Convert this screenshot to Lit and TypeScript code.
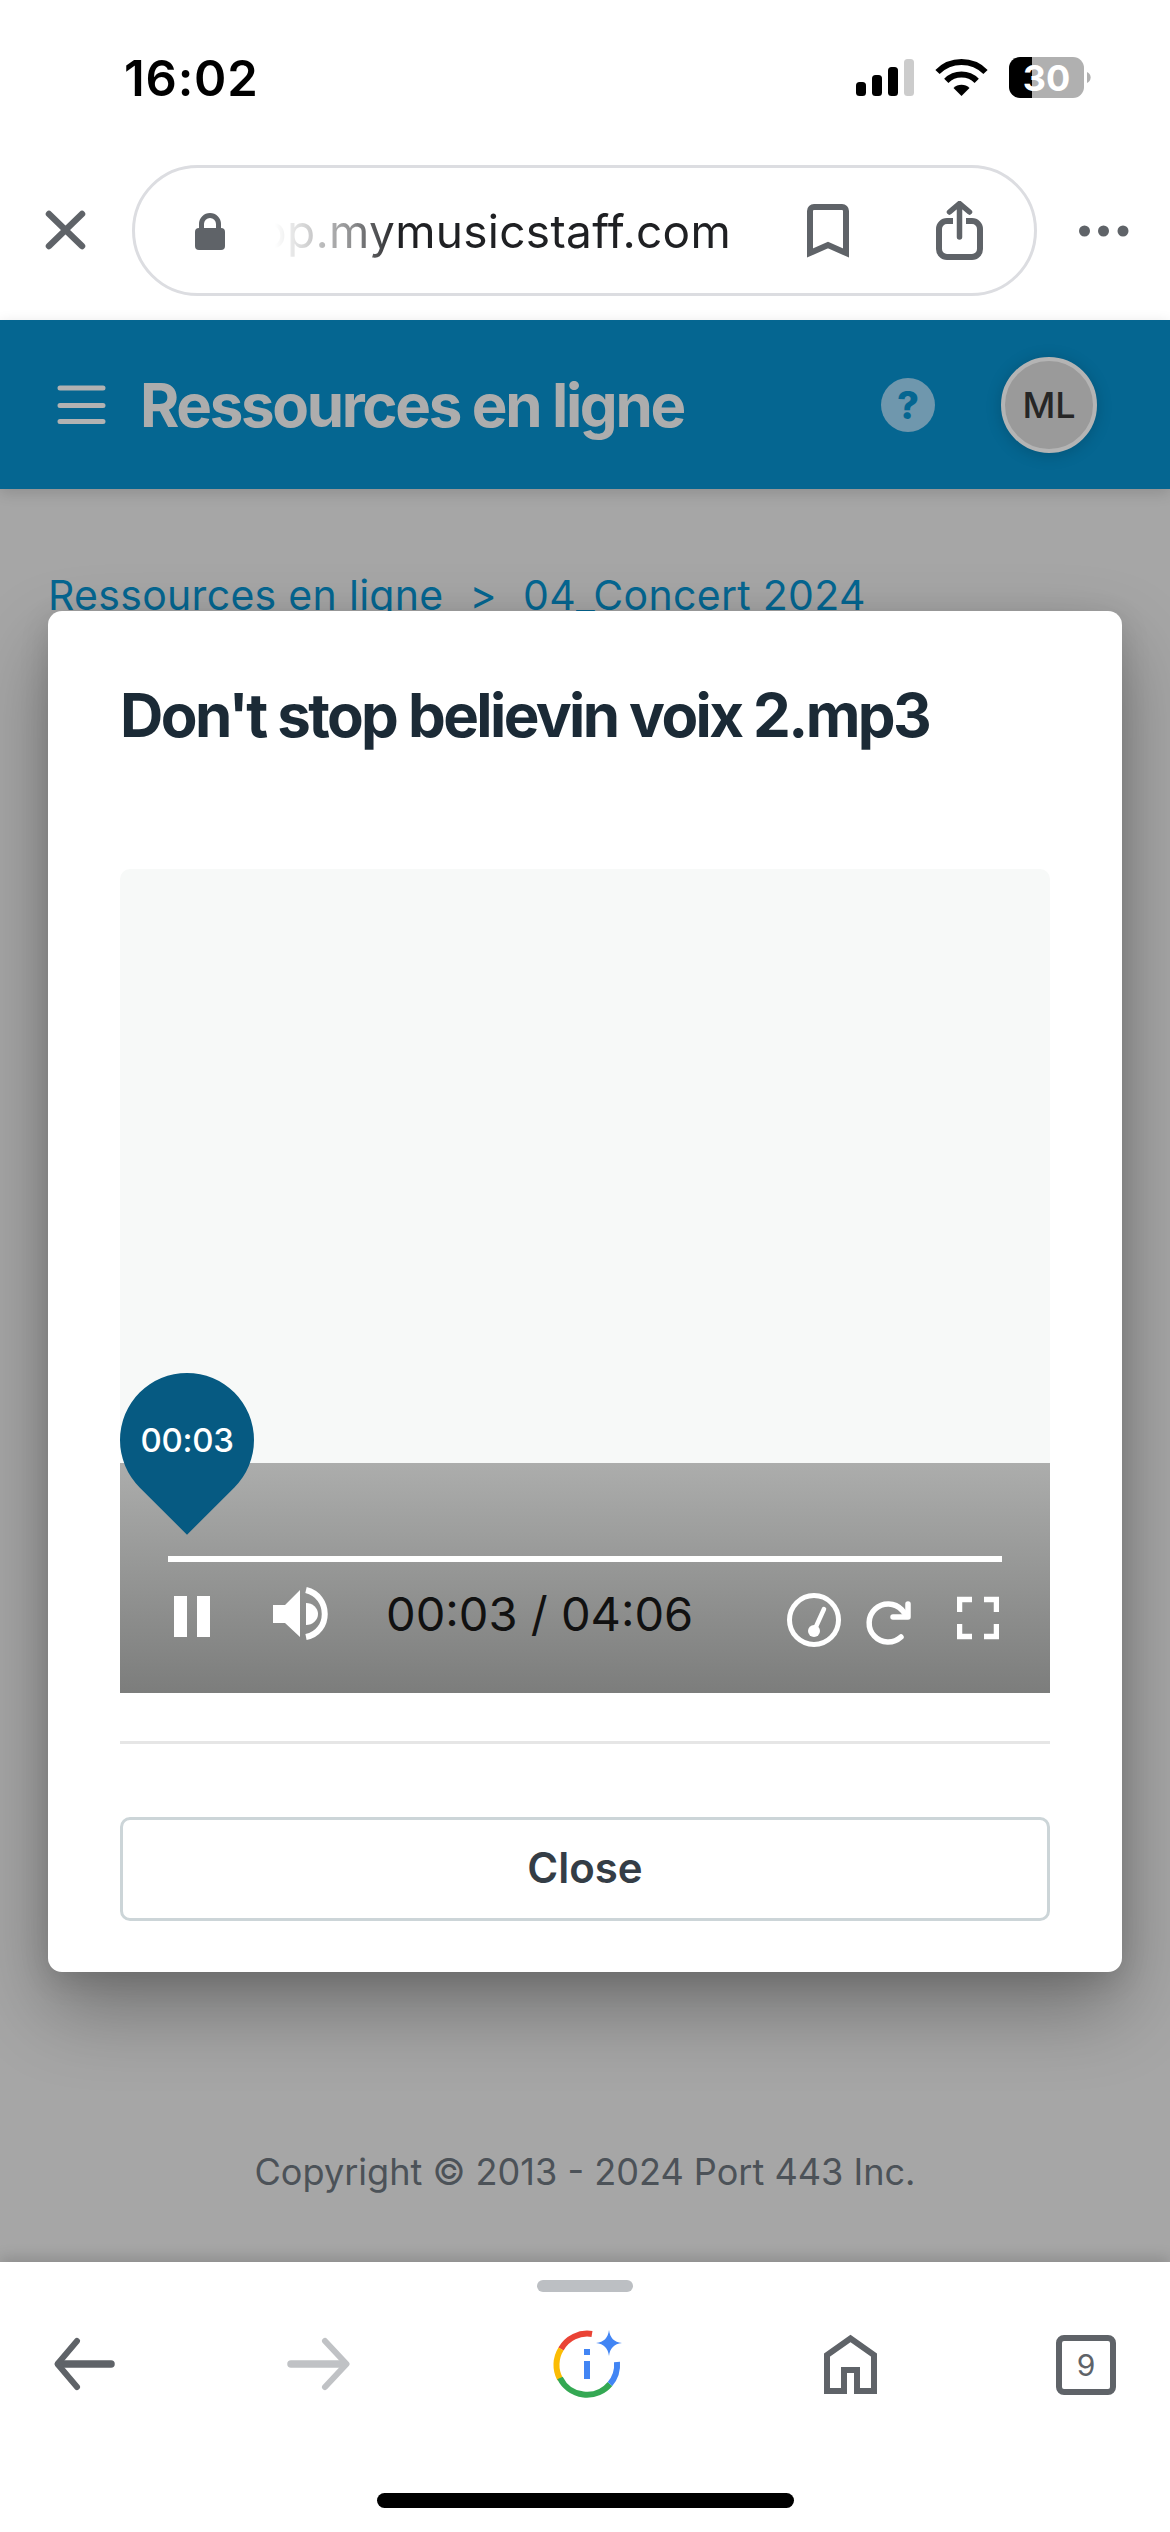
import { LitElement, html, css } from "lit";
import { customElement } from "lit/decorators.js";

@customElement("app-root")
export class AppRoot extends LitElement {
  static styles = css`
    :host {
      display: flex;
      flex-direction: column;
      width: 1170px;
      height: 2532px;
      overflow: hidden;
      background: #fff;
      font-family: Inter, "Liberation Sans", sans-serif;
    }
    svg { display: block; flex: none; }
    .chrome { height: 320px; background: #fff; flex: none; }
    .status { height: 156px; display: flex; align-items: center; }
    .time { margin-left: 124px; font-size: 49px; font-weight: 600; color: #000; letter-spacing: 0.8px; line-height: 1; }
    .status-icons { margin-left: auto; margin-right: 78px; }
    .batt { font: 700 36px Inter, sans-serif; fill: #fff; }
    .urlrow { display: flex; align-items: center; height: 131px; margin-top: 9px; }
    .x { margin-left: 42px; }
    .urlbar {
      margin-left: 43px; width: 905px; height: 131px; box-sizing: border-box; flex: none;
      border: 3px solid #dcdde1; border-radius: 66px; display: flex; align-items: center;
    }
    .lock { margin-left: 60px; }
    .url {
      margin-left: 42px; width: 464px; flex: none; display: flex; justify-content: flex-end; overflow: hidden;
      white-space: nowrap; font-size: 46px; color: #1f2023; letter-spacing: 0.3px; line-height: 60px;
      -webkit-mask-image: linear-gradient(to right, transparent 8px, rgba(0,0,0,.2) 40px, rgba(0,0,0,.5) 85px, #000 130px);
      mask-image: linear-gradient(to right, transparent 8px, rgba(0,0,0,.2) 40px, rgba(0,0,0,.5) 85px, #000 130px);
    }
    .bm { margin-left: 76px; }
    .share { margin-left: 87px; }
    .dots { margin-left: 41px; }

    .header {
      height: 169px; flex: none; background: #056691; display: flex; align-items: center;
      position: relative; z-index: 2; box-shadow: 0 4px 14px rgba(0,0,0,.14);
    }
    .burger { margin-left: 56px; }
    .h-title { margin-left: 32px; font-size: 60px; font-weight: 700; color: #adadad; letter-spacing: -2.35px; line-height: 70px; white-space: nowrap; }
    .help {
      margin-left: auto; width: 54px; height: 54px; border-radius: 50%; background: #6f97ad;
      color: #056691; font-size: 38px; font-weight: 800; display: flex; align-items: center; justify-content: center;
    }
    .avatar {
      margin-left: 66px; margin-right: 73px; width: 96px; height: 96px; box-sizing: border-box; border-radius: 50%;
      border: 4px solid #b4b4b4; background: #9a9a9a; color: #262626; font-size: 36px; font-weight: 500;
      display: flex; align-items: center; justify-content: center; box-shadow: 0 2px 16px rgba(0,0,0,.18);
    }

    .content {
      flex: 1; min-height: 0; position: relative; background: #a6a6a6; display: flex; flex-direction: column;
    }
    .crumbs {
      display: flex; gap: 26px; padding: 82px 0 0 48px; font-size: 41px; line-height: 48px; color: #056691; white-space: nowrap; letter-spacing: 0.3px;
    }
    .copyright {
      margin-top: auto; padding-bottom: 66px; text-align: center; font-size: 36.1px; line-height: 48px; color: #4c5258;
    }
    .modal {
      position: absolute; left: 48px; top: 122px; width: 1074px; height: 1361px; box-sizing: border-box;
      padding: 69px 72px 0; background: #fff; border-radius: 14px; display: flex; flex-direction: column;
      box-shadow: 0 36px 80px rgba(0,0,0,.32), 0 8px 30px rgba(0,0,0,.12);
    }
    .m-title { font-size: 60px; font-weight: 700; color: #1b2a36; letter-spacing: -2.6px; line-height: 70px; white-space: nowrap; }
    .player { position: relative; margin-top: 119px; height: 824px; width: 930px; display: flex; flex-direction: column; flex: none; }
    .video { flex: 1; background: #f7f9f8; border-radius: 10px 10px 0 0; }
    .controls { height: 230px; flex: none; background: linear-gradient(#acadac, #7c7d7c); }
    .bar { height: 6px; background: #fff; margin: 93px 48px 0; }
    .ctl-row { display: flex; align-items: center; height: 65px; margin-top: 23px; }
    .pause { margin-left: 54px; }
    .speaker { margin-left: 63px; }
    .ctime { margin-left: 57px; width: 400px; flex: none; font-size: 47px; line-height: 60px; color: #111; white-space: nowrap; margin-top: -8px; }
    .redo { margin-left: 24px; }
    .full { margin-left: 45px; }
    .pin {
      position: absolute; left: 0; top: 504px; width: 134px; height: 134px; display: flex; align-items: center; justify-content: center;
      color: #fff; font-size: 33px; font-weight: 500; letter-spacing: -0.3px;
    }
    .pin::before {
      content: ""; position: absolute; inset: 0; background: #065a82; border-radius: 50% 50% 0 50%; transform: rotate(45deg);
    }
    .pin span { position: relative; }
    .divider { height: 3px; background: #e6e6e6; margin-top: 48px; flex: none; }
    .close {
      margin-top: 73px; height: 104px; flex: none; box-sizing: border-box; border: 3px solid #ccd5d8; border-radius: 10px; padding-bottom: 3px;
      display: flex; align-items: center; justify-content: center; font-size: 42px; font-weight: 600; color: #343d46;
    }

    .bottom {
      height: 270px; flex: none; background: #fff; position: relative; z-index: 2;
      box-shadow: 0 -4px 14px rgba(0,0,0,.16); display: flex; flex-direction: column;
    }
    .handle { width: 96px; height: 12px; border-radius: 6px; background: #bcbfc3; margin: 18px auto 0 537px; }
    .nav { display: flex; align-items: center; height: 80px; margin-top: 33px; }
    .nav .back { margin-left: 50px; }
    .nav .fwd { margin-left: 167px; }
    .nav .gem { margin-left: 197px; }
    .nav .home { margin-left: 195px; }
    .tabs {
      margin-left: 176px; width: 60px; height: 60px; box-sizing: border-box; border: 6px solid #5f6368; border-radius: 8px;
      display: flex; align-items: center; justify-content: center; font-size: 30px; color: #5f6368; margin-top: -1px;
    }
    .indicator { width: 417px; height: 15px; border-radius: 8px; background: #000; margin: 88px 0 0 377px; }
  `;

  render() {
    return html`
      <div class="chrome">
        <div class="status">
          <div class="time">16:02</div>
          <svg class="status-icons" width="240" height="44" viewBox="852 56 240 44">
            <rect x="856" y="82" width="10" height="14" rx="3.5" fill="#000"/>
            <rect x="872" y="75" width="10" height="21" rx="3.5" fill="#000"/>
            <rect x="888" y="67" width="10" height="29" rx="3.5" fill="#000"/>
            <rect x="904" y="59" width="10" height="37" rx="3.5" fill="#ccc"/>
            <g transform="translate(936 59)">
              <path d="M1.5 13A34 34 0 0 1 49.5 13M10.3 21.8A21.5 21.5 0 0 1 40.7 21.8" fill="none" stroke="#000" stroke-width="6"/>
              <path d="M25.5 37L17.5 29A11.3 11.3 0 0 1 33.5 29Z" fill="#000"/>
            </g>
            <path d="M1032 57H1020a11 11 0 0 0-11 11V87a11 11 0 0 0 11 11H1032Z" fill="#000"/>
            <path d="M1032 57H1073a11 11 0 0 1 11 11V87a11 11 0 0 1-11 11H1032Z" fill="#b0b0b0"/>
            <path d="M1087 72a6 6 0 0 1 0 11Z" fill="#b0b0b0"/>
            <text class="batt" x="1046.5" y="90.5" text-anchor="middle">30</text>
          </svg>
        </div>
        <div class="urlrow">
          <svg class="x" width="47" height="47" viewBox="42 207 47 47">
            <path d="M49 214L82 246M82 214L49 246" stroke="#5f6368" stroke-width="6.5" stroke-linecap="round" fill="none"/>
          </svg>
          <div class="urlbar">
            <svg class="lock" width="30" height="40" viewBox="195 210 30 40">
              <path d="M201.5 229V223a8.5 8.5 0 0 1 17 0V229" fill="none" stroke="#5f6368" stroke-width="5"/>
              <rect x="195" y="227" width="30" height="22" rx="4" fill="#5f6368"/>
            </svg>
            <div class="url">app.mymusicstaff.com</div>
            <svg class="bm" width="42" height="54" viewBox="807 204 42 54">
              <path d="M810 253V211a4 4 0 0 1 4-4H842a4 4 0 0 1 4 4V253L828 245Z" fill="none" stroke="#5f6368" stroke-width="6"/>
            </svg>
            <svg class="share" width="47" height="60" viewBox="936 203 47 60">
              <path d="M953 223H947a8 8 0 0 0-8 8V251a8 8 0 0 0 8 8H972a8 8 0 0 0 8-8V231a8 8 0 0 0-8-8H966" fill="none" stroke="#5f6368" stroke-width="6"/>
              <path d="M959.5 207V239M949.5 214L959.5 205.5L969.5 214" fill="none" stroke="#5f6368" stroke-width="5.5" stroke-linecap="round" stroke-linejoin="round"/>
            </svg>
          </div>
          <svg class="dots" width="52" height="14" viewBox="1078 224 52 14">
            <circle cx="1084.5" cy="231" r="5.5" fill="#5f6368"/>
            <circle cx="1103.5" cy="231" r="5.5" fill="#5f6368"/>
            <circle cx="1123" cy="231" r="5.5" fill="#5f6368"/>
          </svg>
        </div>
      </div>

      <div class="header">
        <svg class="burger" width="52" height="48" viewBox="56 380 52 48">
          <path d="M60 387H103M60 404.5H103M60 420.5H103" stroke="#b2b2b2" stroke-width="5" stroke-linecap="round" fill="none"/>
        </svg>
        <div class="h-title">Ressources en ligne</div>
        <div class="help">?</div>
        <div class="avatar">ML</div>
      </div>

      <div class="content">
        <div class="crumbs"><span>Ressources en ligne</span><span>&gt;</span><span>04_Concert 2024</span></div>
        <div class="copyright">Copyright © 2013 - 2024 Port 443 Inc.</div>
        <div class="modal">
          <div class="m-title">Don't stop believin voix 2.mp3</div>
          <div class="player">
            <div class="video"></div>
            <div class="controls">
              <div class="bar"></div>
              <div class="ctl-row">
                <svg class="pause" width="36" height="65" viewBox="174 1585 36 65">
                  <rect x="174" y="1596" width="13" height="41" fill="#fff"/>
                  <rect x="197" y="1596" width="13" height="41" fill="#fff"/>
                </svg>
                <svg class="speaker" width="56" height="65" viewBox="273 1585 56 65">
                  <path d="M273 1605H285L300 1590V1637L285 1623H273Z" fill="#fff"/>
                  <path d="M306 1603A12 11 0 0 1 306 1625Z" fill="#fff"/>
                  <path d="M306 1590C331 1596 331 1632 306 1637" fill="none" stroke="#fff" stroke-width="6"/>
                </svg>
                <div class="ctime">00:03 / 04:06</div>
                <svg class="gauge" width="56" height="65" viewBox="786 1585 56 65">
                  <circle cx="814" cy="1620" r="24.5" fill="none" stroke="#fff" stroke-width="5"/>
                  <circle cx="814" cy="1631" r="6" fill="#fff"/>
                  <path d="M814 1631L824 1609" stroke="#fff" stroke-width="4.5" stroke-linecap="round"/>
                </svg>
                <svg class="redo" width="46" height="65" viewBox="866 1585 46 65">
                  <path d="M901 1637A19 19 0 1 1 902 1610L907 1616" fill="none" stroke="#fff" stroke-width="5.5" stroke-linecap="round"/>
                  <path d="M908 1604V1617H893" fill="none" stroke="#fff" stroke-width="5.5" stroke-linecap="round" stroke-linejoin="round"/>
                </svg>
                <svg class="full" width="42" height="65" viewBox="957 1585 42 65">
                  <path d="M959.5 1612V1599.5H972M984 1599.5H996.5V1612M996.5 1624V1636.5H984M972 1636.5H959.5V1624" fill="none" stroke="#fff" stroke-width="5.5"/>
                </svg>
              </div>
            </div>
            <div class="pin"><span>00:03</span></div>
          </div>
          <div class="divider"></div>
          <div class="close">Close</div>
        </div>
      </div>

      <div class="bottom">
        <div class="handle"></div>
        <div class="nav">
          <svg class="back" width="68" height="80" viewBox="50 2325 68 80">
            <path d="M59 2364H111" stroke="#5f6368" stroke-width="7.5" stroke-linecap="round" fill="none"/>
            <path d="M77 2341L57.5 2364L77 2387" stroke="#5f6368" stroke-width="6" stroke-linecap="round" stroke-linejoin="round" fill="none"/>
          </svg>
          <svg class="fwd" width="68" height="80" viewBox="285 2325 68 80">
            <path d="M291 2364H344" stroke="#c0c2c5" stroke-width="7.5" stroke-linecap="round" fill="none"/>
            <path d="M325 2341L346.5 2364L325 2387" stroke="#c0c2c5" stroke-width="6" stroke-linecap="round" stroke-linejoin="round" fill="none"/>
          </svg>
          <svg class="gem" width="75" height="80" viewBox="550 2325 75 80">
            <g fill="none" stroke-width="6">
              <path d="M592 2334A30 30 0 0 0 561 2349" stroke="#ea4335"/>
              <path d="M561 2349A30 30 0 0 0 560 2379" stroke="#fbbc04"/>
              <path d="M560 2378A30 30 0 0 0 610 2384" stroke="#34a853"/>
              <path d="M610 2384A30 30 0 0 0 617 2362" stroke="#4285f4"/>
            </g>
            <path d="M609 2330C610 2338 614 2342 622 2343C614 2344 610 2348 609 2356C608 2348 604 2344 596 2343C604 2342 608 2338 609 2330Z" fill="#4285f4"/>
            <rect x="584" y="2349" width="6" height="6" fill="#4285f4"/>
            <rect x="584" y="2361" width="6" height="18" fill="#4285f4"/>
          </svg>
          <svg class="home" width="60" height="80" viewBox="820 2325 60 80">
            <path d="M827 2394V2355L850.5 2338.5L874 2355V2391H857V2370H844V2391H827" fill="none" stroke="#5f6368" stroke-width="6"/>
          </svg>
          <div class="tabs">9</div>
        </div>
        <div class="indicator"></div>
      </div>
    `;
  }
}
